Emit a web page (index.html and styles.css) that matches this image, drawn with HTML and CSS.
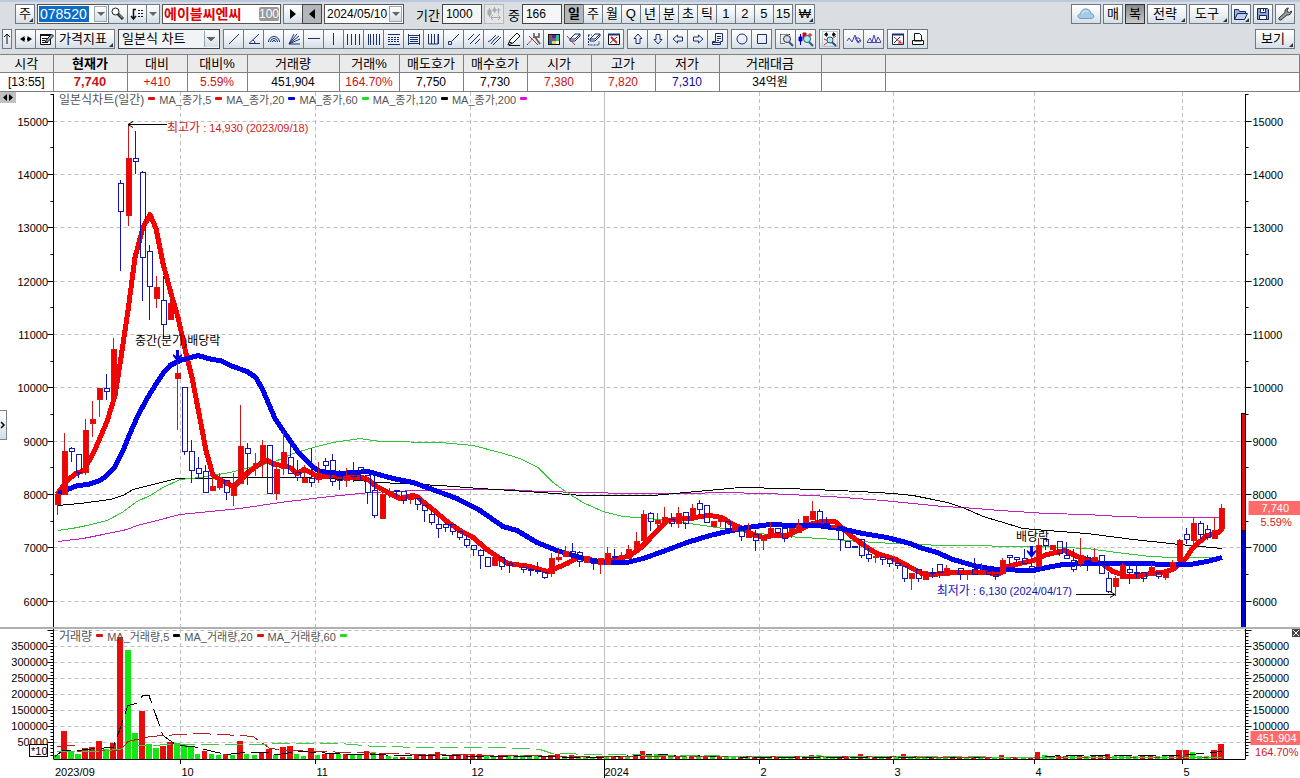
FILE: index.html
```html
<!DOCTYPE html>
<html lang="ko">
<head>
<meta charset="UTF-8">
<meta name="viewport" content="width=device-width, initial-scale=1.0">
<title>에이블씨엔씨 일본식 차트</title>
<link rel="stylesheet" href="styles.css">
</head>
<body>

<header class="toolbar">
  <div class="bar bar-top">
    <button class="btn more">주</button>
    <div class="group code-group">
      <div class="combo code">
        <input type="text" aria-label="종목코드" value="078520">
        <button class="drop" aria-label="종목 목록"></button>
      </div>
      <button class="btn" aria-label="종목 검색"><svg viewBox="0 0 18 18"><circle cx="6.5" cy="6.5" r="3.5" fill="#fff" stroke="#222"/><path d="M9 9l5 5" stroke="#222" stroke-width="3"/><path d="M10 9.500l4 4" stroke="#ccc"/></svg></button>
      <button class="btn" aria-label="정렬"><svg viewBox="0 0 18 18" fill="none" stroke="#111"><path d="M8 4.500H5.500V14M3 11l2.500 3L8 11" stroke-width="1.500"/><path d="M10 5.500h2m1 0h2M10 8.500h2m1 0h2M10 11.500h2m1 0h2"/></svg></button>
      <button class="drop" aria-label="정렬 방식"></button>
    </div>
    <div class="stock-name"><strong>에이블씨엔씨</strong><span>100</span></div>
    <div class="group">
      <button class="btn" aria-label="다음"><svg viewBox="0 0 18 18"><path d="M6 4v10l6-5z"/></svg></button>
      <button class="btn pressed" aria-label="이전"><svg viewBox="0 0 18 18"><path d="M12 4v10L6 9z"/></svg></button>
    </div>
    <div class="combo date">
      <input type="text" aria-label="기준일" value="2024/05/10">
      <button class="drop" aria-label="달력"></button>
    </div>
    <label class="period" for="period">기간</label>
    <input class="num" type="text" id="period" value="1000">
    <button class="btn" disabled aria-label="자동"><svg viewBox="0 0 18 18" fill="none" stroke="#aaa"><path d="M4.500 3v9M9.500 2v6M13.500 3v6M11.500 5h4M6 12.500h9M8 10l-2.500 2.500L8 15M13 10l2.500 2.500L13 15"/><path d="M3 5h3v5H3zM8 4h3v2H8z" fill="#aaa"/></svg></button>
    <label class="count" for="count">중</label>
    <input class="num" type="text" id="count" value="166">
    <div class="group">
      <button class="btn pressed"><b>일</b></button>
      <button class="btn">주</button>
      <button class="btn">월</button>
      <button class="btn">Q</button>
      <button class="btn">년</button>
      <button class="btn">분</button>
      <button class="btn">초</button>
      <button class="btn">틱</button>
      <button class="btn">1</button>
      <button class="btn">2</button>
      <button class="btn">5</button>
      <button class="btn">15</button>
    </div>
    <button class="btn more">₩</button>
    <div class="right">
      <button class="btn cloud" aria-label="클라우드"><svg viewBox="0 0 18 18"><path d="M4 13.500C0 13.500 0 9 3.500 9 4 5 7 3.500 9.500 4c3 .3 4 2.500 4.200 4.500 4 0 4 5 .6 5z" fill="#a6cbe6" stroke="#6f9cc0"/><path d="M5 9c.5-3 4-4 6-2" stroke="#e4f2fb" fill="none"/></svg></button>
      <button class="btn">매</button>
      <button class="btn dark">복</button>
      <button class="btn wide more">전략</button>
      <button class="btn wide more">도구</button>
      <button class="btn more" aria-label="열기"><svg viewBox="0 0 18 18"><path d="M2.500 14.500v-10h4l1 2h6v2" fill="#9fb4dc" stroke="#14285a"/><path d="M2.500 14.500l3-6h10l-3 6z" fill="#c3d0ec" stroke="#14285a"/></svg></button>
      <button class="btn" aria-label="저장"><svg viewBox="0 0 18 18"><path d="M3.500 3.500h10l1 1v10h-11z" fill="#8fa3d6" stroke="#14285a"/><path d="M6.500 3.500h5v4h-5zM5.500 10.500h7v4h-7z" fill="#fff" stroke="#14285a"/><path d="M9.500 4v2" stroke="#14285a"/></svg></button>
      <button class="btn" aria-label="설정"><svg viewBox="0 0 18 18"><path d="M3 13l6-5.500c-.6-2 .8-4.500 3.500-4.500L11 5l.5 2 2 .3L15.500 6c.3 2.500-2 4.500-4.500 4l-6 5c-1.500.5-2.600-.8-2-2z" fill="#999" stroke="#333"/></svg></button>
    </div>
  </div>

  <div class="bar bar-tools">
    <button class="btn slim" aria-label="위로"><svg viewBox="0 0 8 18" fill="none" stroke="#111"><path d="M4 4v10M1 7l3-3 3 3"/></svg></button>
    <div class="group tools">
      <button class="btn" aria-label="좌우"><svg viewBox="0 0 18 18"><path d="M7.500 6v6L3 9zM10.500 6v6L15 9z"/><path d="M5 9h3M10 9h3" stroke="#000" stroke-width="2"/></svg></button>
      <button class="btn" aria-label="편집"><svg viewBox="0 0 18 18"><path d="M3.500 4.500h10v10h-10z" fill="#fff" stroke="#111"/><path d="M3 5h11" stroke="#111" stroke-width="2"/><path d="M5 8.500h6M5 10.500h3M5 12.500h6" stroke="#111"/><path d="M8.500 11l6-7 2 2-6 6-2.500.500z" fill="#9ab" stroke="#111"/></svg></button>
      <button class="btn indicator more">가격지표</button>
    </div>
    <select class="chart-type" aria-label="차트 종류"><option>일본식 차트</option></select>
    <div class="group tools lines">
      <button class="btn" aria-label="추세선"><svg viewBox="0 0 18 18"><path d="M4 14L14 4"/></svg></button>
      <button class="btn" aria-label="각도선"><svg viewBox="0 0 18 18"><path d="M14 4L4 13.500h11M8 10q2 1 2 3.500"/></svg></button>
      <button class="btn" aria-label="원호"><svg viewBox="0 0 18 18"><path d="M3.500 12a5.500 5.500 0 0 1 11 0M5.500 12a3.500 3.500 0 0 1 7 0M7.500 12a1.500 1.500 0 0 1 3 0"/></svg></button>
      <button class="btn" aria-label="부채선"><svg viewBox="0 0 18 18"><path d="M4 14L9 4M4 14l8-10M4 14l10-8M4 14l11-5M4 14h11"/></svg></button>
      <button class="btn" aria-label="수평선"><svg viewBox="0 0 18 18"><path d="M3 8.500h12"/></svg></button>
      <button class="btn" aria-label="수직선"><svg viewBox="0 0 18 18"><path d="M8.500 3v12"/></svg></button>
      <button class="btn" aria-label="시간대"><svg viewBox="0 0 18 18"><path d="M2.500 4v11M6.500 4v11M10.500 4v11M14.500 4v11"/></svg></button>
      <button class="btn" aria-label="피보나치 시간"><svg viewBox="0 0 18 18"><path d="M3.500 4v11M5.500 4v11M8.500 4v11M11.500 4v11M14.500 4v11"/></svg></button>
      <button class="btn" aria-label="되돌림"><svg viewBox="0 0 18 18"><path d="M3 4.500h12M3 14.500h12"/><path d="M3 7.500h12M3 9.500h12M3 11.500h12" stroke-dasharray="2 1"/></svg></button>
      <button class="btn" aria-label="등분선"><svg viewBox="0 0 18 18"><path d="M3.500 4v11M14.500 4v11M3 5.500h12M5 7.500h8M5 9.500h8M5 11.500h8M3 13.500h12"/></svg></button>
      <button class="btn" aria-label="사이클"><svg viewBox="0 0 18 18"><path d="M3.500 4v10h3V4M9.500 4v10M6.500 14h6.500V4M13.500 4v10"/></svg></button>
      <button class="btn" aria-label="반직선"><svg viewBox="0 0 18 18"><path d="M7 11l7-7M3.500 11.500h3v3h-3z"/></svg></button>
      <button class="btn" aria-label="평행선"><svg viewBox="0 0 18 18"><path d="M3 10l6-6M5 14L15 4M10 14l5-5"/></svg></button>
      <button class="btn" aria-label="채널"><svg viewBox="0 0 18 18"><path d="M3 12l3-2 5-5M6 14l3-4 5-4M8 15l3-3 5-5"/></svg></button>
      <button class="btn" aria-label="연필"><svg viewBox="0 0 18 18"><path d="M3 15l2-5 7-7 3 3-7 7-5 2zM4 12l3 1M4 15.500h11" stroke="#111" fill="#fff"/></svg></button>
      <button class="btn" aria-label="도구 설정"><svg viewBox="0 0 18 18"><path d="M2 15l8-9" stroke-dasharray="2 1"/><path d="M4 6l9 9" stroke="#d22"/><path d="M10 7l5 7M9 3v4h5V3" stroke="#555" stroke-width="1.500"/></svg></button>
      <button class="btn" aria-label="색상"><svg viewBox="0 0 18 18"><g stroke="none"><path d="M3 4h12v11H3z" fill="#111"/><path d="M4 5h3v3H4z" fill="#d33"/><path d="M7 5h4v3H7z" fill="#339"/><path d="M11 5h3v3h-3z" fill="#2bc"/><path d="M4 8h3v3H4z" fill="#383"/><path d="M7 8h4v3H7z" fill="#84b"/><path d="M11 8h3v3h-3z" fill="#4c4"/><path d="M4 11h3v3H4z" fill="#36d"/><path d="M7 11h4v3H7z" fill="#dd4"/><path d="M11 11h3v3h-3z" fill="#fff"/></g></svg></button>
      <button class="btn" aria-label="지우개"><svg viewBox="0 0 18 18"><path d="M2 6l8 9" stroke="#d22"/><path d="M5 9l5-5h5v2l-5 5H5zM5 9h5l5-5" fill="#fff" stroke="#14285a"/></svg></button>
      <button class="btn" aria-label="모두 지우기"><svg viewBox="0 0 18 18"><path d="M3 5h4M3.500 5v10H14V11" stroke-dasharray="2 1"/><path d="M5 9l5-5h5v2l-5 5H5zM5 9h5l5-5" fill="#fff" stroke="#14285a"/></svg></button>
      <button class="btn" aria-label="차트 지우기"><svg viewBox="0 0 18 18"><path d="M3.500 4.500h11v10h-11z" fill="#fff" stroke="#111"/><path d="M3 4.500h12" stroke-width="2"/><path d="M5 13l7-6"/><path d="M6 7l6 6" stroke="#d22" stroke-width="2"/></svg></button>
    </div>
    <div class="group tools lines">
      <button class="btn" aria-label="위 화살표"><svg viewBox="0 0 18 18"><path d="M9 4l4 4.500h-2v5H7v-5H5z"/></svg></button>
      <button class="btn" aria-label="아래 화살표"><svg viewBox="0 0 18 18"><path d="M9 14l4-4.500h-2v-5H7v5H5z"/></svg></button>
      <button class="btn" aria-label="왼쪽 화살표"><svg viewBox="0 0 18 18"><path d="M4 9l4.500-4v2h5v4h-5v2z"/></svg></button>
      <button class="btn" aria-label="오른쪽 화살표"><svg viewBox="0 0 18 18"><path d="M14 9L9.500 5v2h-5v4h5v2z"/></svg></button>
      <button class="btn" aria-label="메모"><svg viewBox="0 0 18 18"><path d="M6.500 3.500h7v8h-2v3h-8v-3h3zM8 6.500h4M8 8.500h4M8 10.500h2M4 12.500h7"/></svg></button>
    </div>
    <div class="group tools lines">
      <button class="btn" aria-label="원"><svg viewBox="0 0 18 18"><circle cx="9" cy="9" r="5"/></svg></button>
      <button class="btn" aria-label="사각형"><svg viewBox="0 0 18 18"><path d="M4.500 4.500h9v9h-9z"/></svg></button>
    </div>
    <div class="group tools lines">
      <button class="btn" aria-label="영역 확대"><svg viewBox="0 0 18 18"><path d="M3.500 4.500h9M3.500 4.500v9h5M12.500 4v4" stroke="#111" stroke-dasharray="1 1"/><circle cx="10" cy="9" r="3.500" fill="#cde" stroke="#333"/><path d="M12 12l4 4" stroke="#357" stroke-width="2"/></svg></button>
      <button class="btn" aria-label="봉 확대"><svg viewBox="0 0 18 18"><path d="M3.500 4v11" stroke="#00c"/><path d="M2 7h3v4H2z" fill="#00c" stroke="#00c"/><path d="M6 3h3v5H6z" fill="#d00" stroke="#d00"/><path d="M11 5h4M13 3v4" stroke="#d00"/><circle cx="10" cy="9" r="3.500" fill="#aee" stroke="#357"/><path d="M12 12l4 4" stroke="#357" stroke-width="2"/></svg></button>
    </div>
    <div class="group tools lines">
      <button class="btn" aria-label="전체 보기"><svg viewBox="0 0 18 18"><path d="M1.500 1.500h15v15h-15z" stroke="#7a9" stroke-dasharray="1 1"/><path d="M3 9l12 6M3 15L15 6" stroke="#d22"/><path d="M4 4.500h3M11 4.500h3" stroke="#111" stroke-width="2"/><path d="M6 2v5L3 4.500zM12 2v5l3-2.500z" fill="#111" stroke="none"/><circle cx="9" cy="10" r="3" fill="#aee" stroke="#357"/><path d="M11 12l4 4" stroke="#357" stroke-width="2"/></svg></button>
    </div>
    <div class="group tools lines">
      <button class="btn" aria-label="파동"><svg viewBox="0 0 18 18"><path d="M2 11l2-3 3 4 3-7 3 7 2-2M10 8h4l2 3-3 2z" stroke="#44a"/></svg></button>
      <button class="btn" aria-label="패턴"><svg viewBox="0 0 18 18"><path d="M2 12l3-4 2 4 2-7 2 7 2-5 3 5M2 12.500h14" stroke="#44a"/></svg></button>
    </div>
    <div class="group tools lines">
      <button class="btn" aria-label="차트 초기화"><svg viewBox="0 0 18 18"><path d="M3.500 4.500h11v10h-11z" fill="#fff" stroke="#14285a"/><path d="M3 4.500h12" stroke-width="2"/><path d="M5 13l6-6"/><path d="M5 7l7 6M9 13h5M11 10v3" stroke="#d22"/></svg></button>
      <button class="btn" aria-label="인쇄"><svg viewBox="0 0 18 18"><path d="M3.500 10.500h11v4h-11zM5.500 11V3.500h5l2 2V11z" fill="#fff" stroke="#111"/></svg></button>
    </div>
    <div class="right"><button class="btn wide more">보기</button></div>
  </div>
</header>

<table class="quote">
  <thead>
    <tr><th>시각</th><th class="now">현재가</th><th>대비</th><th>대비%</th><th>거래량</th><th>거래%</th><th>매도호가</th><th>매수호가</th><th>시가</th><th>고가</th><th>저가</th><th>거래대금</th><th></th><th></th></tr>
  </thead>
  <tbody>
    <tr><td>[13:55]</td><td class="up now">7,740</td><td class="up">+410</td><td class="up">5.59%</td><td>451,904</td><td class="up">164.70%</td><td>7,750</td><td>7,730</td><td class="up">7,380</td><td class="up">7,820</td><td class="down">7,310</td><td>34억원</td><td></td><td></td></tr>
  </tbody>
</table>

<main>
  <section class="panel price">
    <svg id="priceChart" class="chart" height="535"></svg>
    <div class="legend">
      <span class="title">일본식차트(일간)</span><i class="red"></i>
      <span>MA_종가,5</span><i class="red"></i>
      <span>MA_종가,20</span><i class="blue"></i>
      <span>MA_종가,60</span><i class="green"></i>
      <span>MA_종가,120</span><i class="black"></i>
      <span>MA_종가,200</span><i class="magenta"></i>
    </div>
    <button class="scroll-mark" aria-label="이동"><svg viewBox="0 0 16 11"><path d="M7 2v7L3 5.500zM9 2v7l4-3.500z"/></svg></button>
    <button class="side-handle" aria-label="펼치기"><svg viewBox="0 0 6 12"><path d="M1 3l3 3-3 3" fill="none" stroke="#000" stroke-width="1.500"/></svg></button>
  </section>
  <section class="panel volume">
    <svg id="volumeChart" class="chart" height="149"></svg>
    <div class="legend">
      <span class="title">거래량</span><i class="red"></i>
      <span>MA_거래량,5</span><i class="black"></i>
      <span>MA_거래량,20</span><i class="red"></i>
      <span>MA_거래량,60</span><i class="green"></i>
    </div>
    <button class="close" aria-label="닫기"><svg viewBox="0 0 8 8"><path d="M1 1l6 6M7 1L1 7" stroke="#fff"/></svg></button>
  </section>
</main>

<script src="chart.js"></script>
</body>
</html>
```

FILE: styles.css
```css
* {
    box-sizing: border-box;
}
body {
    margin: 0;
    background: #fff;
    color: #000;
    font-family: "Liberation Sans", "Noto Sans CJK KR", sans-serif;
    font-size: 12px;
}
button, input, select {
    font: inherit;
    color: inherit;
    margin: 0;
    padding: 0;
    border-radius: 0;
}

/* toolbar */
.toolbar {
    background: #dadee2;
    border-top: 2px solid #b9c8dc;
    padding: 2px 5px 5px 2px;
    display: flex;
    flex-direction: column;
    gap: 5px;
}
.bar {
    display: flex;
    align-items: center;
    height: 20px;
}
.bar-top {
    gap: 2px;
    padding-left: 13px;
}
.bar-tools {
    gap: 3px;
}
.group {
    display: flex;
}
.group > * + * {
    margin-left: -1px;
}
.right {
    display: flex;
    gap: 2px;
    margin-left: auto;
}
.btn {
    position: relative;
    flex: none;
    display: flex;
    align-items: center;
    justify-content: center;
    width: 20px;
    height: 20px;
    border: 1px solid #6b7a86;
    background: linear-gradient(#fff, #eef2f5 50%, #d5dee6);
    font-size: 13px;
    line-height: 16px;
    white-space: nowrap;
}
.btn svg {
    flex: none;
    width: 18px;
    height: 18px;
}
.tools .btn {
    width: 21px;
}
.lines svg {
    fill: none;
    stroke: #1c2f73;
}
.btn.pressed {
    background: #b4b7ba;
    border-color: #444;
}
.btn.dark {
    background: linear-gradient(#8a8a8a, #c8c8c8);
    border-color: #333;
}
.btn:disabled {
    border-color: #b5b8ba;
    background: #e3e5e7;
}
.btn.slim {
    width: 10px;
}
.btn.slim svg {
    width: 8px;
}
.btn.wide {
    width: 40px;
    padding-right: 4px;
}
.btn.cloud {
    width: 30px;
}
.tools .btn.indicator {
    width: 60px;
    padding-right: 4px;
}
.more::after {
    content: "";
    position: absolute;
    right: 1px;
    bottom: 1px;
    border: 2px solid #333;
    border-top-color: transparent;
    border-left-color: transparent;
}
.combo {
    display: flex;
    height: 20px;
    padding: 1px;
    border: 1px solid #555;
    background: #fff;
}
.combo input {
    flex: 1;
    min-width: 0;
    border: 0;
    padding: 0 1px;
    background: #fff;
}
.code {
    width: 72px;
}
.code-group .code input {
    flex: none;
    width: 50px;
    margin-right: 5px;
    background: #0a6cc8;
    color: #fff;
    font-size: 14px;
}
.date {
    width: 80px;
}
.drop {
    flex: none;
    width: 13px;
    border: 1px solid #9aa5ae;
    background: linear-gradient(#fff, #d5dee6);
    display: flex;
    align-items: center;
    justify-content: center;
}
.drop::after {
    content: "";
    border: 4px solid transparent;
    border-top-color: #666;
    border-bottom: 0;
}
.code-group > .drop {
    width: 14px;
    border-color: #6b7a86;
}
.stock-name {
    display: flex;
    align-items: center;
    justify-content: space-between;
    width: 119px;
    height: 20px;
    padding: 0 1px;
    border: 1px solid #555;
    background: #fff;
    color: #e00000;
    font-size: 14px;
    line-height: 18px;
}
.stock-name span {
    background: #999;
    color: #fff;
    font-size: 12px;
    line-height: 14px;
    border-radius: 2px;
}
.bar label {
    font-size: 13px;
}
.period {
    margin-left: 10px;
}
.count {
    margin-left: 2px;
}
.num {
    width: 40px;
    height: 20px;
    border: 1px solid #444;
    padding-left: 3px;
    background: #f4f6f8;
}
.chart-type {
    appearance: none;
    width: 102px;
    height: 20px;
    border: 1px solid #444;
    padding-left: 3px;
    font-size: 13px;
    line-height: 18px;
    background: linear-gradient(to top right, transparent 50%, #666 50%) right 8px top 7px / 4px 4px no-repeat,
        linear-gradient(to top left, transparent 50%, #666 50%) right 4px top 7px / 4px 4px no-repeat,
        linear-gradient(#9aa5ae, #9aa5ae) right 14px top 1px / 1px 16px no-repeat,
        linear-gradient(#fff, #d5dee6) right 1px top 1px / 13px 16px no-repeat,
        #f1f4f6;
}

/* quote row */
.quote {
    width: 100%;
    table-layout: fixed;
    border-collapse: collapse;
}
.quote th, .quote td {
    height: 18px;
    padding: 0;
    border: 1px solid #808080;
    text-align: center;
    font-weight: normal;
    line-height: 17px;
    white-space: nowrap;
}
.quote td {
    height: 19px;
    line-height: 18px;
}
.quote th {
    background: #ebebeb;
    font-size: 13px;
    width: 64px;
}
.quote .now {
    font-weight: bold;
}
.quote td.now {
    font-size: 13px;
}
.quote tr > :first-child {
    width: 53px;
    border-left: 0;
}
.quote th:nth-child(2) { width: 74px; }
.quote th:nth-child(3),
.quote th:nth-child(4),
.quote th:nth-child(6) { width: 60px; }
.quote th:nth-child(5) { width: 92px; }
.quote th:nth-child(12) { width: 102px; }
.quote th:last-child { width: auto; }
.up { color: #c81414; }
.down { color: #0a0aa0; }

/* chart panels */
.panel {
    position: relative;
}
.price {
    border-bottom: 2px solid #b0b0b0;
}
.chart {
    display: block;
    width: 100%;
    font-size: 11px;
}
.legend {
    position: absolute;
    top: 0;
    left: 59px;
    display: flex;
    align-items: center;
    gap: 4px;
    height: 13px;
    color: #555;
    font-size: 11px;
    white-space: nowrap;
}
.legend .title {
    font-size: 12px;
}
.legend i {
    width: 7px;
    height: 3px;
    border-radius: 1px;
}
.red { background: #e01010; }
.blue { background: #0000dd; }
.green { background: #20dd20; }
.black { background: #000; }
.magenta { background: #dd10dd; }
.scroll-mark {
    position: absolute;
    top: 0;
    left: 0;
    width: 16px;
    height: 11px;
    border: 0;
    background: #c0c0c0;
    display: flex;
}
.side-handle {
    position: absolute;
    top: 318px;
    left: -1px;
    width: 8px;
    height: 30px;
    border: 1px solid #7a8792;
    background: linear-gradient(#fff, #d5dee6);
    display: flex;
    align-items: center;
}
.close {
    position: absolute;
    top: 0;
    right: 0;
    width: 8px;
    height: 8px;
    border: 0;
    background: #444;
    display: flex;
}

.grid {
    stroke: #c0c0c0;
    stroke-dasharray: 4 3;
}
.grid.year {
    stroke-dasharray: none;
}
.axis {
    stroke: #000;
    fill: none;
}
.rise {
    stroke: #d01818;
    fill: #f80000;
}
.fall {
    stroke: #1414b4;
    fill: none;
}
.ma {
    fill: none;
    stroke-width: 1;
    stroke-linejoin: round;
    shape-rendering: crispEdges;
}
.ma5 { stroke: #f80000; stroke-width: 5; }
.ma20 { stroke: #0000f0; stroke-width: 5; }
.ma60 { stroke: #30c830; }
.ma120 { stroke: #000; }
.ma200 { stroke: #c020c0; }
.vma5 { stroke: #000; stroke-dasharray: 18 6; }
.vma20 { stroke: #b82020; stroke-dasharray: 18 6; }
.vma60 { stroke: #40c840; stroke-dasharray: 18 6; }
.vol-up { fill: #e80c0c; }
.vol-down { fill: #10e810; }
.day-up { fill: #e01010; stroke: #000; }
.day-down { fill: #0000c8; stroke: #000; }
.tag { fill: #ff6b6b; }
.tag-text { fill: #fff; }
.text-red { fill: #d01818; }
.text-blue { fill: #1414b4; }
.note { font-size: 12px; }
```

FILE: chart.js
```js
// 화면 좌표 기준 봉 데이터: [고가, 몸통 위, 몸통 아래, 저가, 양봉 여부]
var candles = [
  [491,494,504,514,1],[433,451,494,494,1],[447,448,451,461,0],[454,454,472,477,0],[419,430,472,474,1],
  [401,419,423,436,1],[388,388,399,416,1],[374,388,391,399,0],[338,349,397,397,1],[180,183,211,270,0],
  [125,158,215,225,1],[131,158,161,173,0],[171,172,257,300,0],[245,251,286,319,0],[276,287,298,307,1],
  [276,300,324,338,0],[293,303,319,319,1],[360,373,378,429,1],[387,387,451,454,0],[440,451,470,482,0],
  [457,468,473,478,0],[465,471,492,492,0],[473,486,490,490,1],[473,478,487,489,1],[480,480,492,499,0],
  [473,483,495,505,1],[405,446,483,483,1],[443,448,453,484,0],[453,463,466,475,1],[440,445,462,476,1],
  [445,445,493,493,0],[467,469,493,499,1],[431,452,468,474,1],[442,457,473,473,0],[460,472,477,480,0],
  [465,478,482,482,1],[448,478,482,486,0],[462,473,477,482,1],[458,461,465,470,0],[454,460,481,485,0],
  [470,476,480,489,0],[468,476,480,486,1],[462,472,476,481,0],[467,467,471,480,0],[475,475,492,503,0],
  [475,490,515,517,0],[490,494,518,518,1],[488,491,494,497,1],[490,490,491,496,0],[491,491,500,503,0],
  [495,495,499,503,1],[498,498,504,509,0],[505,505,510,521,0],[507,514,522,524,0],[518,524,528,537,0],
  [523,524,527,531,0],[524,524,531,534,0],[531,531,537,539,0],[535,539,545,547,0],[545,545,549,555,0],
  [549,550,555,568,0],[557,557,566,566,0],[552,557,565,565,1],[557,557,566,569,0],[563,563,565,572,0],
  [563,563,565,565,1],[563,567,569,572,0],[568,569,570,575,0],[562,570,571,573,0],[572,572,577,578,0],
  [553,558,573,576,1],[550,557,559,561,1],[546,551,556,556,1],[543,551,555,555,0],[551,552,561,566,0],
  [556,556,562,562,1],[558,558,563,569,0],[558,558,564,573,1],[547,553,564,564,1],[549,556,557,560,0],
  [552,555,559,559,1],[545,549,558,558,1],[532,541,548,548,1],[510,514,540,540,1],[512,513,521,530,0],
  [513,520,523,526,1],[507,517,522,523,1],[513,519,523,526,0],[507,513,523,527,1],[512,512,523,528,0],
  [504,508,518,518,1],[500,503,509,514,0],[505,505,522,522,0],[521,521,526,526,1],[515,517,521,526,1],
  [521,521,528,531,0],[527,527,530,530,1],[530,530,536,540,0],[523,532,537,537,1],[530,534,540,550,0],
  [535,535,540,549,1],[522,528,537,537,1],[528,528,532,535,0],[528,528,538,541,0],[528,528,534,537,1],
  [519,525,532,532,1],[516,516,522,522,1],[501,511,519,519,1],[509,511,525,525,0],[517,523,526,526,0],
  [525,525,527,527,1],[528,528,539,550,0],[541,541,547,547,0],[546,546,547,547,0],[539,539,555,557,0],
  [548,554,558,561,0],[556,556,557,562,1],[557,557,559,564,0],[558,558,563,566,0],[557,563,565,568,0],
  [566,566,578,581,0],[573,573,578,589,1],[569,569,578,581,0],[572,572,579,579,1],[568,572,573,577,0],
  [564,564,572,577,0],[565,568,575,575,1],[571,571,573,573,1],[568,568,574,579,0],[570,570,574,579,1],
  [558,569,574,574,0],[563,570,574,574,1],[571,571,574,574,0],[574,574,576,579,0],[558,560,573,573,1],
  [555,555,557,565,0],[557,557,559,561,0],[549,558,563,563,0],[563,566,568,572,0],[538,545,566,566,1],
  [538,539,545,549,0],[545,545,549,549,1],[541,541,553,555,0],[542,555,558,558,0],[549,560,569,571,0],
  [538,555,563,566,1],[555,557,560,570,0],[548,557,561,561,1],[555,555,573,573,0],[572,578,591,592,0],
  [576,578,586,595,1],[563,565,578,578,1],[566,569,572,583,0],[564,572,573,577,0],[572,572,578,581,0],
  [563,567,575,575,1],[572,572,576,578,0],[570,570,577,579,1],[560,562,570,570,1],[539,540,560,560,1],
  [528,534,539,543,0],[518,523,540,544,1],[521,523,534,538,0],[525,529,537,539,0],[517,530,538,538,1],
  [504,508,528,528,1]
];

// 거래량 막대 높이, 음수는 전봉 대비 감소(녹색)
var volumes = [
  -4,28,-8,-5,11,12,18,-10,16,122,-109,-26,48,-15,-11,13,17,-16,-15,-13,-5,8,-5,-4,5,-4,18,-5,-4,7,
  10,-4,12,13,-5,-3,11,-4,5,6,-5,5,-4,-4,8,-7,6,-3,-2,2,-2,4,5,5,7,-2,4,4,4,5,5,-4,-2,4,-3,-3,-4,-3,
  -3,2,2,5,-3,4,-3,-3,-2,3,-3,3,3,-3,4,8,-4,-5,5,-3,3,-4,3,-3,3,-2,2,-2,-3,2,-2,2,3,-2,2,-3,-2,2,
  2,4,-4,-3,-2,2,2,-2,5,-3,2,-2,2,-2,5,-3,-3,-2,2,-2,-3,2,2,-2,2,-2,2,-2,4,-2,2,-2,2,7,-4,-3,3,3,
  -3,3,-3,3,4,5,-3,-3,-3,-3,3,4,-3,-3,3,9,9,-7,-3,-3,9,15
];

// 이동평균선
var ma = {
  ma200: "58,541 83,538 103,534 127,529 137,525 157,520 180,514 240,508 280,502 330,496 370,492 417,490 440,489 507,489 540,491 630,493 690,493 720,492 767,493 830,496 883,500 943,506 963,507 1000,510 1047,513 1087,514 1120,516 1153,517 1222,517",
  ma120: "58,505 80,503 110,499 123,495 133,489 177,478 250,477 300,477 347,479 380,482 440,485 480,488 527,491 583,495 653,495 697,491 740,487 787,488 813,489 860,491 893,493 913,495 933,499 947,502 963,507 983,516 1000,521 1023,528 1047,530 1087,533 1133,539 1180,544 1222,548",
  ma60: "58,530 72,528 87,525 107,520 122,512 137,501 150,495 163,487 180,479 200,477 230,472 253,466 273,462 293,453 317,446 333,442 360,438 380,441 440,442 473,445 500,452 520,458 538,467 553,482 567,492 583,502 603,511 623,516 650,518 690,523 710,526 750,532 787,536 820,538 860,541 893,543 943,545 1040,546 1087,548 1117,552 1150,556 1173,557 1222,557",
  ma5: "57,494 67,480 76,473 84,470 95,449 107,421 115,395 121,357 128,310 135,257 143,227 150,214 156,228 163,263 171,293 178,317 186,353 192,377 199,413 206,450 213,475 220,479 227,483 234,486 241,479 248,472 255,467 262,462 267,460 275,464 283,465 290,467 297,473 304,469 311,472 318,477 333,475 347,477 362,477 368,479 375,485 388,492 400,498 412,495 417,496 424,502 433,509 447,521 460,530 473,537 487,549 500,558 508,563 530,566 547,571 553,569 567,563 578,557 590,559 600,562 620,558 630,555 640,548 650,538 660,527 668,520 680,518 692,518 700,516 710,515 722,517 733,524 743,528 753,534 763,537 773,535 787,535 800,529 813,523 822,521 835,521 843,528 853,537 867,547 877,553 893,558 907,565 922,573 933,574 953,572 980,572 1000,573 1007,566 1020,563 1033,560 1047,554 1065,550 1077,556 1090,560 1102,563 1113,571 1127,576 1138,576 1150,573 1163,572 1175,568 1180,562 1185,559 1193,547 1207,535 1217,533 1223,528",
  ma20: "58,493 67,489 78,485 88,484 100,480 107,475 115,466 123,450 130,433 137,417 147,398 157,382 163,373 170,365 180,360 198,355 212,359 220,360 233,366 247,371 256,377 263,390 275,418 283,430 297,450 312,466 320,471 340,473 368,471 393,478 413,482 427,487 457,498 480,510 503,526 517,530 537,542 557,550 580,557 600,562 627,562 643,558 663,551 687,542 710,535 727,531 747,527 770,524 793,525 817,525 840,528 863,533 887,537 910,543 920,547 937,552 953,559 977,566 997,569 1033,570 1047,567 1063,564 1087,563 1117,563 1147,563 1163,564 1190,564 1207,561 1222,557"
};
var vma = {
  vma5: "55,756 63,750 78,750 95,748 113,747 119,731 128,705 136,703 143,695 149,695 156,715 163,735 177,745 193,746 213,751 227,754 245,752 267,752 277,754 300,751 350,754 420,755 600,757 655,754 680,755 760,757 1040,757 1060,755 1180,755 1222,751",
  vma20: "57,746 75,745 78,751 120,750 128,741 150,736 180,734 200,733 240,735 253,736 260,741 270,748 290,750 350,752 430,754 600,756 1222,757",
  vma60: "57,751 100,751 125,748 140,745 180,744 260,744 280,743 340,743 375,746 430,747 500,747 540,749 552,753 600,754 760,756 1222,757"
};

var months = [[180.5, "10"], [315.5, "11"], [470.5, "12"], [604.5, "2024"], [759.5, "2"], [893.5, "3"], [1034.5, "4"], [1182.5, "5"]];
var LEFT = 53.5;
var PRICE_TOP = 92;
var VOLUME_TOP = 629;

function line(x1, y1, x2, y2, cls) {
  return '<line class="' + cls + '" x1="' + x1 + '" y1="' + y1 + '" x2="' + x2 + '" y2="' + y2 + '"/>';
}
function text(x, y, str, cls, anchor) {
  return '<text class="' + (cls || '') + '" x="' + x + '" y="' + y + '" text-anchor="' + (anchor || 'start') + '">' + str + '</text>';
}
function rect(x, y, w, h, cls) {
  return '<rect class="' + cls + '" x="' + x + '" y="' + y + '" width="' + w + '" height="' + h + '"/>';
}
function path(d, cls) {
  return '<path class="' + cls + '" d="' + d + '"/>';
}

function draw() {
  var width = document.getElementById('priceChart').clientWidth;
  var right = width - 54.5;
  var k = (right - LEFT) / 1192;

  // 기준 폭의 x를 현재 창 폭으로 변환
  function sx(x) {
    return LEFT + (x - LEFT) * k;
  }
  function snap(x) {
    return Math.floor(sx(x)) + 0.5;
  }
  function polyline(points, cls) {
    var pts = points.split(' ').map(function (p) {
      var xy = p.split(',');
      return sx(+xy[0]) + ',' + (+xy[1] + 0.5);
    });
    return '<polyline class="ma ' + cls + '" points="' + pts.join(' ') + '"/>';
  }

  drawPrice();
  drawVolume();

  function drawPrice() {
    var s = '';
    for (var price = 15000; price >= 6000; price -= 1000) {
      var y = Math.floor(121 + (15000 - price) * 16 / 300) + 0.5;
      s += line(LEFT, y, right, y, 'grid');
      s += line(LEFT - 6, y, LEFT, y, 'axis') + line(right, y, right + 6, y, 'axis');
      s += text(48, y + 4, price, '', 'end') + text(right + 7, y + 4, price);
    }
    for (var i = 0; i < 10; i++) {
      var t = Math.floor(94.4 + i * 53.33) + 0.5;
      s += line(LEFT - 3, t, LEFT, t, 'axis') + line(right, t, right + 3, t, 'axis');
    }
    months.forEach(function (m) {
      s += line(snap(m[0]), 92, snap(m[0]), 627, m[1] === '2024' ? 'grid year' : 'grid');
    });
    s += line(LEFT, 94, LEFT, 627, 'axis') + line(right, 94, right, 627, 'axis');

    for (var key in ma) {
      s += polyline(ma[key], key);
    }
    candles.forEach(function (c, n) {
      var x = snap(57.5 + n * 7.055);
      var cls = c[4] ? 'rise' : 'fall';
      s += line(x, c[0], x, c[1], cls) + line(x, c[2], x, c[3] + 1, cls);
      s += rect(x - 2, c[1] + 0.5, 5, Math.max(c[2] - c[1], 1), cls);
    });

    // 당일 등락 막대
    s += rect(right - 4, 413.5, 4, 117, 'day-up') + rect(right - 4, 530.5, 4, 97, 'day-down');

    // 최고가, 최저가, 배당락
    s += path('M' + sx(128) + ' 124.500H' + sx(167) + 'M' + (sx(128) + 5) + ' 121.500l-5 3 5 3', 'axis');
    s += text(sx(167), 132, '<tspan class="note">최고가</tspan> : 14,930 (2023/09/18)', 'text-red');
    s += path('M' + sx(1076) + ' 594.500H' + sx(1115) + 'm-5 -3l5 3-5 3', 'axis');
    s += text(sx(1072), 595, '<tspan class="note">최저가</tspan> : 6,130 (2024/04/17)', 'text-blue', 'end');
    s += text(sx(135), 345, '중간(분기)배당락', 'note');
    s += text(sx(1016), 541, '배당락', 'note');
    s += arrow(sx(177.5), 350) + arrow(sx(1031.5), 546);

    s += rect(right + 3, 501, 54, 14, 'tag') + text(right + 16, 512, '7,740', 'tag-text');
    s += text(right + 15, 526, '5.59%', 'text-red');
    put('priceChart', s, PRICE_TOP);
  }

  function arrow(x, y) {
    return '<path fill="#0000dd" d="M' + (x - 1.5) + ' ' + y + 'h3v6l3-2v2l-4.500 6-4.500-6v-2l3 2z"/>';
  }

  function drawVolume() {
    var s = '';
    for (var i = 0; i < 8; i++) {
      var y = 630.5 + i * 16;
      s += line(LEFT, y, right, y, 'grid');
      s += line(LEFT - 6, y, LEFT, y, 'axis') + line(right, y, right + 6, y, 'axis');
      if (i > 0) {
        s += text(48, y + 3, 400000 - i * 50000, '', 'end');
        if (i < 7) s += text(right + 7, y + 3, 400000 - i * 50000);
      }
    }
    for (var t = 1; t < 40; t++) {
      var ty = Math.round(630 + t * 3.2) + 0.5;
      s += line(LEFT - 3, ty, LEFT, ty, 'axis') + line(right, ty, right + 3, ty, 'axis');
    }
    months.forEach(function (m) {
      var x = snap(m[0]);
      s += line(x, 629, x, 759, m[1] === '2024' ? 'grid year' : 'grid');
      s += line(x, 759, x, m[1] === '2024' ? 778 : 764, 'axis');
      s += text(x + (m[1] === '2024' ? 0 : 1), 776, m[1]);
    });
    volumes.forEach(function (v, n) {
      var h = Math.abs(v);
      s += rect(Math.floor(sx(54.5 + n * 7.055)), 759 - h, 5 + (n < 20 || h > 8 ? 1 : 0), h, v > 0 ? 'vol-up' : 'vol-down');
    });
    for (var key in vma) {
      s += polyline(vma[key], key);
    }
    s += line(LEFT, 629, LEFT, 759, 'axis') + line(right, 629, right, 759, 'axis');
    s += line(LEFT, 759.5, right, 759.5, 'axis');
    s += text(55, 776, '2023/09');
    s += '<rect x="29.500" y="744.500" width="18" height="12" fill="#fff" stroke="#000"/>' + text(31, 755, '*10');
    s += rect(right + 5, 731, 52, 14, 'tag') + text(right + 51, 742, '451,904', 'tag-text', 'end');
    s += text(right + 53, 756, '164.70%', 'text-red', 'end');
    put('volumeChart', s, VOLUME_TOP);
  }

  function put(id, s, top) {
    document.getElementById(id).innerHTML = '<g transform="translate(0,-' + top + ')">' + s + '</g>';
  }
}

draw();
window.addEventListener('resize', draw);
```
